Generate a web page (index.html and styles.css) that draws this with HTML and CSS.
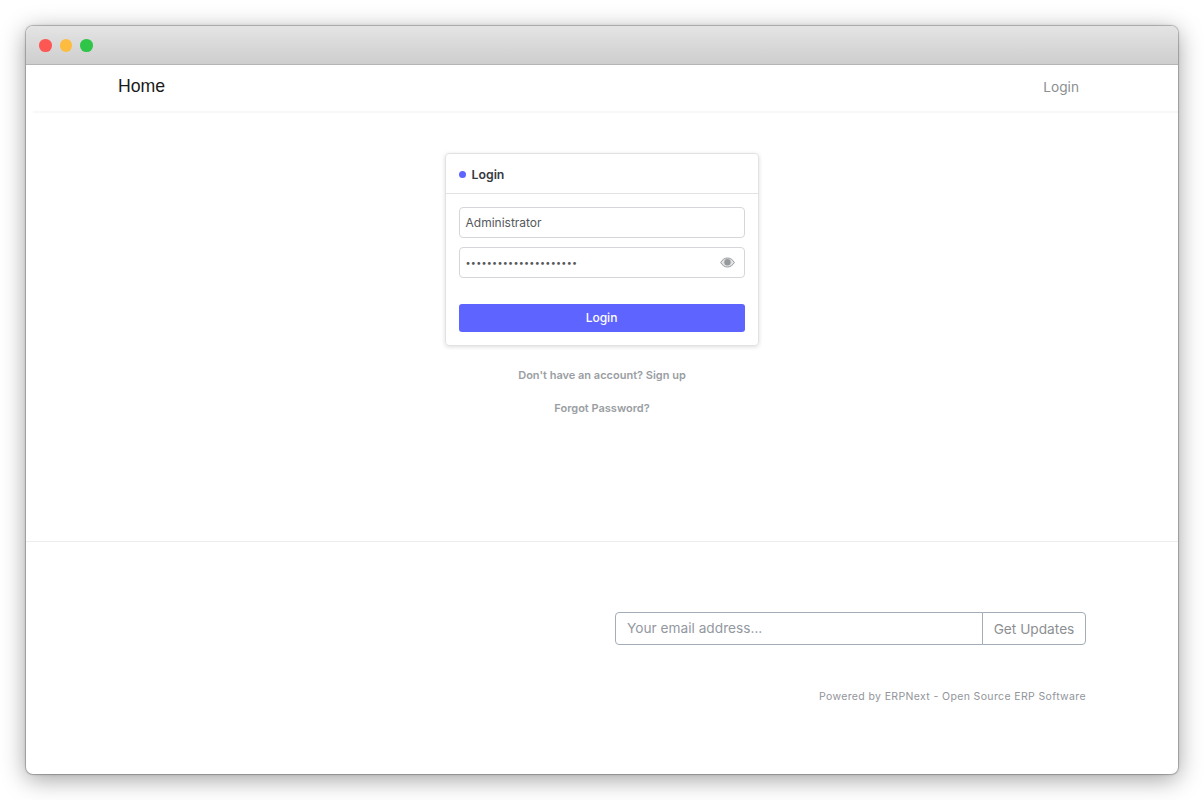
FILE: index.html
```html
<!DOCTYPE html>
<html lang="en">
<head>
<meta charset="utf-8">
<title>Login</title>
<link rel="stylesheet" href="styles.css">
</head>
<body>
<div class="window">
  <div class="titlebar">
    <span class="light red"></span>
    <span class="light yellow"></span>
    <span class="light green"></span>
  </div>
  <nav class="navbar">
    <a class="brand">Home</a>
    <a class="nav-login">Login</a>
  </nav>
  <main class="main">
    <section class="card">
      <header class="card-head"><span class="dot"></span><span class="card-title">Login</span></header>
      <div class="card-body">
        <div class="field"><span class="field-text">Administrator</span></div>
        <div class="field field-pass">
          <span class="pass-text">•••••••••••••••••••••</span>
          <svg class="eye" width="15" height="11" viewBox="0 0 15 11" aria-hidden="true">
            <path d="M.7 5.5C2.3 2.6 4.7 1 7.5 1s5.2 1.6 6.8 4.5C12.7 8.4 10.3 10 7.5 10S2.3 8.4.7 5.5Z" fill="#e2e3e4" stroke="#96999c" stroke-width="1"/>
            <circle cx="7.5" cy="5.3" r="3.2" fill="#96999c"/>
          </svg>
        </div>
        <button class="btn-login">Login</button>
      </div>
    </section>
    <p class="link link-first">Don't have an account? Sign up</p>
    <p class="link link-second">Forgot Password?</p>
  </main>
  <footer class="footer">
    <div class="subscribe">
      <div class="email">Your email address...</div>
      <div class="updates">Get Updates</div>
    </div>
    <div class="powered">Powered by ERPNext - Open Source ERP Software</div>
  </footer>
</div>
</body>
</html>
```
FILE: styles.css
```css
* { box-sizing: border-box; }
html, body { margin: 0; height: 100%; background: #fff; overflow: hidden; }
body { padding: 26px; font-family: Inter, "Liberation Sans", sans-serif; }
.window {
  width: 1152px; height: 748px; background: #fff; border-radius: 7px;
  box-shadow: 0 0 0 1px rgba(0,0,0,.16), 0 0 3px rgba(0,0,0,.25), 0 5px 24px rgba(0,0,0,.38);
  display: flex; flex-direction: column; overflow: hidden;
}
.titlebar {
  height: 39px; flex: none; display: flex; align-items: center; gap: 8px; padding: 1px 0 0 13px;
  background: linear-gradient(#e4e4e4, #cecece); border-bottom: 1px solid #b4b4b4;
}
.light { width: 12.6px; height: 12.6px; border-radius: 50%; }
.red { background: #fc5753; }
.yellow { background: #fdbc40; }
.green { background: #2fc548; }
.navbar {
  height: 48px; flex: none; margin-left: 7px; padding: 0 99px 3px 85px; display: flex; align-items: center; justify-content: space-between;
  border-bottom: 2px solid #f8f8f8;
}
.brand { font-family: "Liberation Sans", Arial, sans-serif; font-size: 17.7px; color: #1a1a1a; }
.nav-login { font-size: 13.7px; color: #8c8f92; }
.main { height: 429px; flex: none; display: flex; flex-direction: column; align-items: center; border-bottom: 1px solid #ecedee; padding-top: 40px; }
.card {
  width: 314px; height: 193px; border: 1px solid #e0e2e4; border-radius: 4px; box-shadow: 0 1px 4px rgba(0,0,0,.14); margin-left: -1px;
}
.card-head { height: 40px; display: flex; align-items: center; gap: 6px; padding: 1px 0 0 13px; border-bottom: 1px solid #e0e2e4; }
.dot { width: 7px; height: 7px; border-radius: 50%; background: #5e64ff; }
.card-title { font-size: 12.3px; font-weight: 600; color: #36393e; }
.card-body { padding: 13px 13px 0; display: flex; flex-direction: column; gap: 9px; }
.field {
  height: 31px; border: 1px solid #d4d6d9; border-radius: 4px; display: flex; align-items: center; justify-content: space-between; padding: 0 9px 0 6px;
  font-size: 12px; color: #55585c;
}
.pass-text { font-size: 9px; letter-spacing: .26px; color: #55585c; }
.eye { display: block; }
.btn-login {
  height: 28px; margin-top: 17px; padding: 0 0 2px; border: 0; border-radius: 3px; background: #5e64ff; color: #fff; font: 500 12px Inter, "Liberation Sans", sans-serif;
}
.link { margin: 0; font-size: 11px; font-weight: 600; color: #9a9ea3; text-align: center; line-height: 14px; }
.link-first { margin-top: 22px; }
.link-second { margin-top: 19px; }
.footer { flex: 1; display: flex; flex-direction: column; align-items: flex-end; padding: 70px 92px 0 0; }
.subscribe { display: flex; width: 471px; height: 33px; font-size: 13.7px; color: #93989f; }
.email { flex: 1; border: 1px solid #a3adb8; border-radius: 4px 0 0 4px; padding: 0 11px 2px; display: flex; align-items: center; height: 33px; }
.updates { width: 104px; border: 1px solid #a3adb8; margin-left: -1px; border-radius: 0 4px 4px 0; display: flex; align-items: center; justify-content: center; color: #8c8f92; }
.powered { margin-top: 45px; font-size: 10.5px; letter-spacing: .37px; color: #92959a; line-height: 14px; }
```
